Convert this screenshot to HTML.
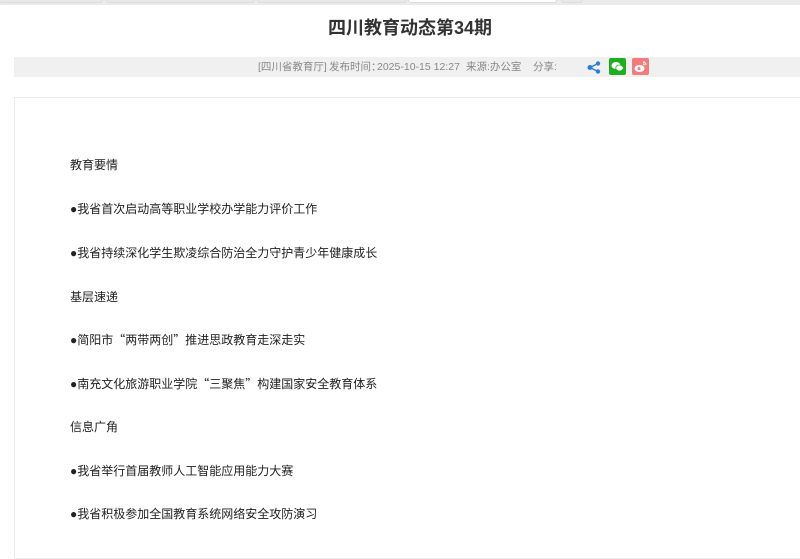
<!DOCTYPE html>
<html><head><meta charset="utf-8"><style>
body{margin:0;width:800px;height:529px;overflow:hidden;background:#fff;font-family:"Liberation Sans","Noto Sans CJK SC",sans-serif;position:relative}
.top{position:absolute;left:0;top:0;width:800px;height:5px;background:#ebebeb}
.tab{position:absolute;top:0;height:2px;border:1px solid #dcdcdc;border-top:0;border-radius:0 0 3px 3px;background:#e8e8e8}
h1{position:absolute;left:0;width:820px;top:16px;margin:0;text-align:center;font-size:18px;font-weight:bold;color:#333;line-height:24px}
.meta{position:absolute;left:14px;top:57px;width:786px;height:20px;background:#f0f0f0;font-size:10.5px;color:#888;line-height:20px;white-space:nowrap}
.meta span{position:absolute;top:0}
.box{position:absolute;left:14px;top:97px;width:800px;height:460px;border:1px solid #ececec}
p{position:absolute;left:70px;margin:0;font-size:12px;color:#222;line-height:16px}
.q{font-family:"Noto Sans CJK SC",sans-serif}
</style></head><body>
<div class="top"><div class="tab" style="left:-1px;width:102px"></div><div class="tab" style="left:106px;width:147px"></div><div class="tab" style="left:257px;width:148px"></div><div class="tab" style="left:408px;width:147px;background:#fff"></div><div class="tab" style="left:561px;width:20px"></div></div>
<h1>四川教育动态第34期</h1>
<div class="meta">
<span style="left:244px">[四川省教育厅]</span>
<span style="left:315px">发布时间：</span>
<span style="left:363px;width:80px;text-align:right">2025-10-15 12:27</span>
<span style="left:452px">来源:办公室</span>
<span style="left:519px">分享:</span>
<svg style="position:absolute;left:573px;top:4px" width="14" height="13" viewBox="0 0 14 13"><circle cx="3" cy="6.5" r="2.5" fill="#2a7fd8"/><circle cx="11" cy="2.5" r="2.2" fill="#2a7fd8"/><circle cx="11" cy="10.5" r="2.2" fill="#2a7fd8"/><path d="M3 6.5L11 2.5M3 6.5L11 10.5" stroke="#2a7fd8" stroke-width="1.5"/></svg>
<svg style="position:absolute;left:595px;top:1px" width="17" height="17" viewBox="0 0 17 17"><rect width="17" height="17" rx="2" fill="#1fae1f"/><ellipse cx="7" cy="7.5" rx="4.5" ry="3.5" fill="#fff"/><ellipse cx="10.5" cy="10" rx="3.8" ry="3" fill="#fff" stroke="#1fae1f" stroke-width=".8"/></svg>
<svg style="position:absolute;left:618px;top:1px" width="17" height="17" viewBox="0 0 17 17"><rect width="17" height="17" rx="2" fill="#f47b7b"/><ellipse cx="7.5" cy="10.5" rx="5" ry="3.5" fill="#fff"/><circle cx="7" cy="10.5" r="1.5" fill="#f47b7b"/><path d="M11 4a3 3 0 0 1 3 3M11 6a1.2 1.2 0 0 1 1.3 1.2" stroke="#fff" stroke-width="1.2" fill="none"/></svg>
</div>
<div class="box"></div>
<p style="top:157px">教育要情</p>
<p style="top:201px">●我省首次启动高等职业学校办学能力评价工作</p>
<p style="top:245px">●我省持续深化学生欺凌综合防治全力守护青少年健康成长</p>
<p style="top:289px">基层速递</p>
<p style="top:332px">●简阳市<span class="q">“</span>两带两创<span class="q">”</span>推进思政教育走深走实</p>
<p style="top:376px">●南充文化旅游职业学院<span class="q">“</span>三聚焦<span class="q">”</span>构建国家安全教育体系</p>
<p style="top:419px">信息广角</p>
<p style="top:463px">●我省举行首届教师人工智能应用能力大赛</p>
<p style="top:506px">●我省积极参加全国教育系统网络安全攻防演习</p>
</body></html>
